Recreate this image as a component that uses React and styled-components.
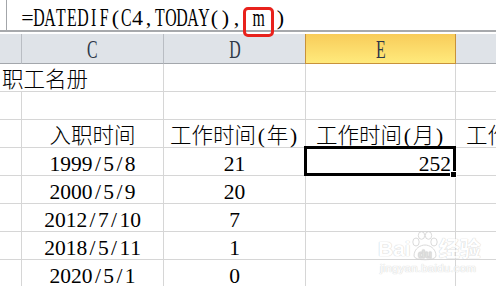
import React from 'react';
import styled, { createGlobalStyle, css } from 'styled-components';

const Global = createGlobalStyle`
  html, body { margin: 0; padding: 0; background: #fff; }
  body {
    width: 496px; height: 286px; overflow: hidden;
    font-family: "Liberation Serif", "Noto Sans CJK SC", serif;
  }
`;

const Sheet = styled.div`
  position: relative;
  width: 496px;
  height: 286px;
  overflow: hidden;
  background: #fff;
`;

const FormulaBar = styled.div`
  position: relative;
  display: flex;
  height: 30px;
  border-bottom: 2px solid #a7a9ac;
`;

const NameEdge = styled.div`
  width: 6px;
  border-right: 1px solid #a3a6aa;
`;

const FormulaText = styled.div`
  padding: 5px 0 0 15px;
  font-size: 22px;
  line-height: 25px;
  color: #000;
  white-space: nowrap;
`;

/* red annotation frame drawn over the formula bar and header */
const RedFrame = styled.div`
  position: absolute;
  left: 243px;
  top: 7px;
  width: 31px;
  height: 30px;
  box-sizing: border-box;
  border: 3px solid #e8221c;
  border-radius: 5px;
  z-index: 5;
  pointer-events: none;
`;

const Gap = styled.div`
  height: 2px;
`;

const Grid = styled.div`
  display: grid;
  grid-template-columns: 22px 142px 142px 150px 150px;
  grid-template-rows: 30px;
  grid-auto-rows: 28px;
  width: 606px;
`;

const HeadCell = styled.div`
  box-sizing: border-box;
  display: flex;
  align-items: center;
  justify-content: center;
  padding-top: 2px;
  background: #dfe3e8;
  border-right: 1px solid #b9bdc3;
  border-bottom: 1px solid #a3a7ac;
  font-size: 22px;
  line-height: 24px;
  color: #2d3747;
  ${p => p.$active && css`
    margin-left: -1px;
    background: linear-gradient(#f8cc5a, #ffea7c);
    border-left: 1px solid #c8923a;
    border-right-color: #c8923a;
    border-bottom-color: #c8923a;
  `}
`;

const alignMap = { left: 'flex-start', center: 'center', right: 'flex-end' };

const Cell = styled.div`
  box-sizing: border-box;
  min-width: 0;
  display: flex;
  align-items: flex-end;
  justify-content: ${p => alignMap[p.$align]};
  padding: 0 ${p => (p.$align === 'right' ? '4px' : '2px')};
  border-right: ${p => (p.$noRight ? 'none' : '1px solid #d6d6d6')};
  border-bottom: 1px solid #d6d6d6;
  font-size: 21.5px;
  font-weight: 300;
  line-height: 21.5px;
  white-space: nowrap;
  color: #000;
  ${p => p.$selected && css`
    position: relative;
    z-index: 3;
    &::after {
      content: '';
      position: absolute;
      top: -2px;
      left: -2px;
      right: -1px;
      bottom: -1px;
      border: 3px solid #000;
      pointer-events: none;
    }
    &::before {
      content: '';
      position: absolute;
      right: -2px;
      bottom: -3px;
      width: 5px;
      height: 5px;
      background: #000;
      border: 1px solid #fff;
      z-index: 1;
    }
  `}
`;

const Run = styled.span`
  display: block;
`;

const Ch = styled.span`
  display: inline-flex;
  justify-content: center;
  width: ${p => (p.$wide ? '1em' : '0.5em')};
`;

const Glyph = styled.span`
  display: inline-block;
  white-space: pre;
  transform: ${p => (p.$squeeze ? 'scale(0.72, 1.12)' : 'none')};
`;

const isWide = c => c.codePointAt(0) > 0x2e7f;

function Mono({ text, squeeze = false }) {
  return (
    <>
      {Array.from(text).map((c, i) => (
        <Ch key={i} $wide={isWide(c)}>
          <Glyph $squeeze={squeeze && /[A-Za-z]/.test(c)}>{c}</Glyph>
        </Ch>
      ))}
    </>
  );
}

const Watermark = styled.div`
  position: absolute;
  left: 378px;
  top: 231px;
  z-index: 1;
  pointer-events: none;
  color: #fff;
  font-family: "Liberation Sans", "Noto Sans CJK SC", sans-serif;
  text-shadow: 0 0 1px #c4c4c4, 0 0 1px #c4c4c4;
  opacity: 0.75;
`;

const WmTop = styled.div`
  display: flex;
  align-items: flex-end;
  font-size: 21px;
  font-weight: bold;
  line-height: 26px;
`;

const WmBottom = styled.div`
  font-size: 11.5px;
  line-height: 13px;
  padding-left: 2px;
  letter-spacing: 0.2px;
`;

const Paw = () => (
  <svg width="28" height="31" viewBox="0 0 28 31">
    <g fill="#fff" stroke="#cfcfcf" strokeWidth="1">
      <ellipse cx="5" cy="11" rx="3.2" ry="4" />
      <ellipse cx="10.5" cy="4.5" rx="3.2" ry="3.8" />
      <ellipse cx="17.5" cy="4.5" rx="3.2" ry="3.8" />
      <ellipse cx="23" cy="11" rx="3.2" ry="4" />
      <path d="M3 25 C3 17 10 14 14 14 C18 14 25 17 25 25 C25 30 3 30 3 25 Z" />
    </g>
    <text x="14" y="27" textAnchor="middle" fontSize="11" fontWeight="bold" fill="#fff" stroke="#cfcfcf" strokeWidth="0.6" fontFamily="Liberation Sans, sans-serif">du</text>
  </svg>
);

const columns = [
  { id: 'B', label: '' },
  { id: 'C', label: 'C' },
  { id: 'D', label: 'D' },
  { id: 'E', label: 'E' },
  { id: 'F', label: '' },
];

const rows = [
  [{ t: '职工名册', align: 'left', noRight: true }, {}, {}, {}, {}],
  [{}, {}, {}, {}, {}],
  [{}, { t: '入职时间' }, { t: '工作时间(年)' }, { t: '工作时间(月)' }, { t: '工作时间(日)' }],
  [{}, { t: '1999/5/8' }, { t: '21' }, { t: '252', align: 'right', selected: true }, {}],
  [{}, { t: '2000/5/9' }, { t: '20' }, {}, {}],
  [{}, { t: '2012/7/10' }, { t: '7' }, {}, {}],
  [{}, { t: '2018/5/11' }, { t: '1' }, {}, {}],
  [{}, { t: '2020/5/1' }, { t: '0' }, {}, {}],
];

export default function App() {
  return (
    <>
      <Global />
      <Sheet>
        <FormulaBar>
          <NameEdge />
          <FormulaText>
            <Mono text="=DATEDIF(C4,TODAY(), m )" squeeze />
          </FormulaText>
          <RedFrame />
        </FormulaBar>
        <Gap />
        <Grid>
          {columns.map(c => (
            <HeadCell key={c.id} $active={c.id === 'E'}>
              {c.label && <Run><Mono text={c.label} squeeze /></Run>}
            </HeadCell>
          ))}
          {rows.map((r, ri) =>
            r.map((cell, ci) => (
              <Cell
                key={`${ri}-${ci}`}
                $align={cell.align || 'center'}
                $noRight={cell.noRight}
                $selected={cell.selected}
              >
                {cell.t && <Run><Mono text={cell.t} /></Run>}
              </Cell>
            ))
          )}
        </Grid>
        <Watermark>
          <WmTop>
            <span>Bai</span>
            <Paw />
            <span>经验</span>
          </WmTop>
          <WmBottom>jingyan.baidu.com</WmBottom>
        </Watermark>
      </Sheet>
    </>
  );
}
